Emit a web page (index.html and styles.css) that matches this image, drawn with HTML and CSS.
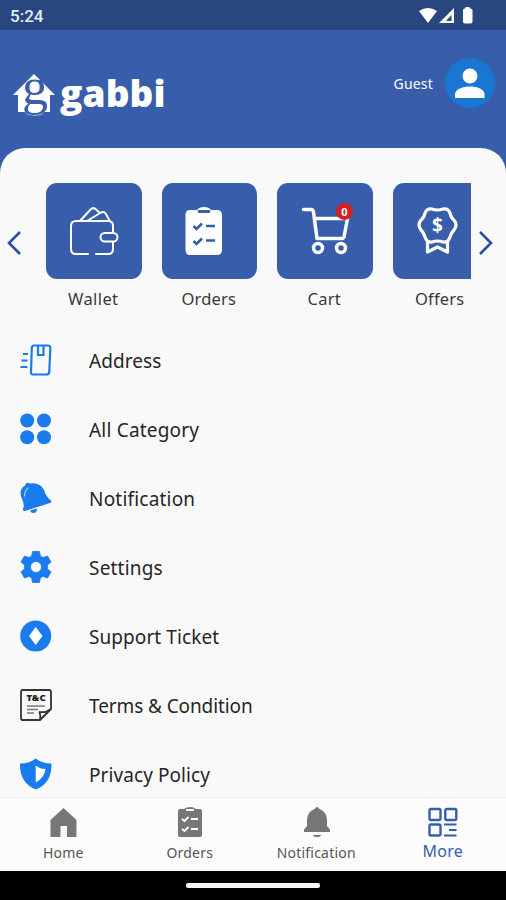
FILE: index.html
```html
<!DOCTYPE html>
<html lang="en">
<head>
  <meta charset="utf-8">
  <title>gabbi</title>
  <link rel="stylesheet" href="styles.css">
</head>
<body>
  <div class="statusbar">
    <span class="time">5:24</span>
    <svg class="status-icons" width="56" height="18" viewBox="0 0 56 18" fill="#fff">
      <path d="M0 4 Q9 -2 18 4 L9 16 Z"/>
      <path d="M35 1 V16 H20 Z M32.500 8 L27 14 H32.500 Z" fill-rule="evenodd"/>
      <path d="M44 3 Q44 1.500 46 1.500 L46.500 0 H50.500 L51 1.500 Q53.500 1.500 53.500 3 V14.500 Q53.500 16.500 51.500 16.500 H46 Q44 16.500 44 14.500 Z"/>
    </svg>
  </div>

  <header class="header">
    <div class="logo">
      <svg class="logo-mark" width="43" height="46" viewBox="0 0 43 46">
        <path d="M21 1 L42 22 H37 V39 H31 Q29 42.500 22 42.500 Q14 42.500 12 39 H5 V22 H0 Z" fill="#fff"/>
        <text x="22" y="31" class="logo-g">g</text>
      </svg>
      <span class="logo-text">gabbi</span>
    </div>
    <div class="user">
      <span class="user-name">Guest</span>
      <div class="avatar">
        <svg width="50" height="50" viewBox="0 0 50 50" fill="#fff">
          <circle cx="25" cy="18" r="7.500"/>
          <path d="M10 40 V36.500 C10 31 18 28.500 25 28.500 S39.500 31 39.500 36.500 V40 Z"/>
        </svg>
      </div>
    </div>
  </header>

  <main class="sheet">
    <div class="slider">
      <svg class="arrow" width="16" height="26" viewBox="0 0 16 26"><path d="M14 2 L3 13 L14 24"/></svg>
      <div class="tiles">
        <div class="tile">
          <div class="tile-box">
            <svg width="96" height="96" viewBox="0 0 96 96" fill="none" stroke="#fff" stroke-width="2" stroke-linecap="round" stroke-linejoin="round">
              <path d="M42 71 H30 Q25 71 25 66 V43 Q25 38 30 38 H62 Q67 38 67 43 V50 M67 59 V66 Q67 71 62 71 H50"/>
              <rect x="54.500" y="50" width="17" height="8.500" rx="4.200"/>
              <path d="M34 38 L44.500 26.500 Q47 24 49.500 26 L54 30 M41 38 L55 29.500 Q58 28 60 31 L63.500 37.500"/>
            </svg>
          </div>
          <span class="tile-label wallet">Wallet</span>
        </div>
        <div class="tile">
          <div class="tile-box">
            <svg width="96" height="96" viewBox="0 0 96 96">
              <path d="M28 27 H35 Q37 24 42 24 Q47 24 49 27 H55 Q60 27 60 32 V67 Q60 72 55 72 H28 Q23.500 72 23.500 67 V32 Q23.500 27 28 27 Z" fill="#fff"/>
              <path d="M37 28.500 H47" stroke="#375dab" stroke-width="2.800" stroke-linecap="round"/>
              <path d="M31.500 43 L34.500 46 L40 40.500 M31.500 58 L34.500 61 L40 55.500 M44 43 H53 M44 57.500 H53" fill="none" stroke="#375dab" stroke-width="2.600"/>
            </svg>
          </div>
          <span class="tile-label">Orders</span>
        </div>
        <div class="tile">
          <div class="tile-box">
            <svg width="96" height="96" viewBox="0 0 96 96" fill="none" stroke="#fff" stroke-width="3.500" stroke-linecap="round" stroke-linejoin="round">
              <path d="M26.500 26.500 H34 Q36 26.500 36.500 29 L40 55.500 H65 Q66.500 55.500 67 54 L70.500 35.500 H38"/>
              <circle cx="41" cy="65" r="4.500"/>
              <circle cx="64" cy="65" r="4.500"/>
            </svg>
            <span class="badge">0</span>
          </div>
          <span class="tile-label">Cart</span>
        </div>
        <div class="tile">
          <div class="tile-box">
            <svg width="96" height="96" viewBox="0 0 96 96" fill="none" stroke="#fff" stroke-width="3.200" stroke-linejoin="round">
              <path d="M39 26 Q44.500 28 50 26 Q55 25 57 30 Q58 35 61 37 Q65 42 61 47 Q58 50 57 54 Q55 60 50 59 Q44.500 57 39 59 Q34 60 32 54 Q31 50 28 47 Q24 42 28 37 Q31 35 32 30 Q34 25 39 26 Z"/>
              <path d="M34.500 58 V69 L44.500 64 L54.500 69 V58"/>
              <text x="44.500" y="49" class="dollar">$</text>
            </svg>
          </div>
          <span class="tile-label">Offers</span>
        </div>
      </div>
      <svg class="arrow" width="16" height="26" viewBox="0 0 16 26"><path d="M2 2 L13 13 L2 24"/></svg>
    </div>

    <ul class="menu">
      <li>
        <svg width="32" height="32" viewBox="0 0 32 32" fill="none" stroke="#1b7be5" stroke-width="2.200">
          <path d="M14 1.500 H28 Q30.500 1.500 30.300 4 L29.300 28 Q29 30.500 26.500 30.500 H13 Q10.800 30.500 11 28 L11.800 4 Q12 1.500 14 1.500 Z"/>
          <path d="M18 2 V11 H23.500 V2 M3 10 H8 M1.500 16.500 H7.500 M0.500 23 H7.500"/>
        </svg>
        <span>Address</span>
      </li>
      <li>
        <svg width="32" height="32" viewBox="0 0 32 32" fill="#197bee">
          <circle cx="7.200" cy="7.500" r="7"/><circle cx="24" cy="7.500" r="7"/>
          <circle cx="7.200" cy="24.300" r="7"/><circle cx="24" cy="24.300" r="7"/>
        </svg>
        <span class="wide">All Category</span>
      </li>
      <li>
        <svg width="32" height="32" viewBox="0 0 32 32" fill="#197bee">
          <path d="M5 3.500 Q6 -0.500 10 1.500 Q20 0 24 8 Q26 15 31 18.500 Q32 20.500 30 21 L5 29 Q2.500 29.500 3 27 Q5 23 2 17 Q-2 8 5 3.500 Z"/>
          <path d="M10 28.500 L17 26.500 Q17 30.500 14 31 Q11 31.500 10 28.500 Z"/>
          <path d="M8 6 Q4.500 9 4.500 14" fill="none" stroke="#a9cdfb" stroke-width="1.200" stroke-linecap="round"/>
        </svg>
        <span class="wide">Notification</span>
      </li>
      <li>
        <svg width="32" height="32" viewBox="0 0 32 32" fill="#197bee">
          <path d="M12.500 0.500 H19.500 L20.300 5 L23 6.500 L27.500 5 L31 11 L27.500 14 V18 L31 21 L27.500 27 L23 25.500 L20.300 27 L19.500 31.500 H12.500 L11.700 27 L9 25.500 L4.500 27 L1 21 L4.500 18 V14 L1 11 L4.500 5 L9 6.500 L11.700 5 Z M16 10.500 A5.500 5.500 0 1 0 16 21.500 A5.500 5.500 0 1 0 16 10.500 Z" fill-rule="evenodd" stroke="#197bee" stroke-width="0.800" stroke-linejoin="round"/>
        </svg>
        <span class="wide">Settings</span>
      </li>
      <li>
        <svg width="32" height="32" viewBox="0 0 32 32">
          <circle cx="15.700" cy="16" r="15.500" fill="#197bee"/>
          <path d="M15.700 7 L22.500 16 L15.700 25 L9 16 Z" fill="#fff"/>
        </svg>
        <span>Support Ticket</span>
      </li>
      <li>
        <svg width="32" height="32" viewBox="0 0 32 32" fill="none" stroke="#333" stroke-width="1.800" stroke-linejoin="round">
          <path d="M2.500 1 H29 Q31 1 31 3 V20 L20 31 H2.500 Q1 31 1 29 V3 Q1 1 2.500 1 Z M20 31 Q21 27 19.500 23 Q26 24 31 20"/>
          <path d="M7 17 H25 M7 20.500 H18 M7 24 H14" stroke="#777" stroke-width="1.300"/>
          <text x="16" y="12" class="tc">T&amp;C</text>
        </svg>
        <span class="narrow">Terms &amp; Condition</span>
      </li>
      <li>
        <svg width="32" height="32" viewBox="0 0 32 32">
          <path d="M15.700 0.500 Q22 5.500 31.500 5.500 Q32 25 15.700 31.500 Q-0.500 25 0 5.500 Q9.500 5.500 15.700 0.500 Z" fill="#197bee"/>
          <path d="M15.700 7.500 Q20 11 25.500 11 Q25 19 15.700 24.500 Z" fill="#fff"/>
        </svg>
        <span>Privacy Policy</span>
      </li>
    </ul>
  </main>

  <nav class="bottom-nav">
    <div class="nav-item">
      <svg width="32" height="32" viewBox="0 0 32 32"><path d="M16.500 1 L29.500 13 V30 H20 V19 H13.500 V30 H3.500 V13 Z" fill="#777"/></svg>
      <span>Home</span>
    </div>
    <div class="nav-item">
      <svg width="32" height="32" viewBox="0 0 32 32">
        <path d="M6 2 H10 Q12 0 16 0 Q20 0 22 2 H26 Q28 2 28 4 V28 Q28 30 26 30 H6 Q4 30 4 28 V4 Q4 2 6 2 Z" fill="#777"/>
        <path d="M12 3 H20 M8 12 L10.500 14 L14.500 10 M8 22 L10.500 24 L14.500 20 M17 12 H24 M17 22 H24" fill="none" stroke="#fff" stroke-width="1.800"/>
      </svg>
      <span>Orders</span>
    </div>
    <div class="nav-item">
      <svg width="32" height="32" viewBox="0 0 32 32" fill="#777">
        <path d="M14.500 2 Q17 -2 19.500 2 Q27 5 27 13 V19 L30 22.500 V25 H4 V22.500 L7 19 V13 Q7 5 14.500 2 Z"/>
        <path d="M13 28 H21 Q20.500 30 17 30 Q13.500 30 13 28 Z"/>
      </svg>
      <span>Notification</span>
    </div>
    <div class="nav-item active">
      <svg width="32" height="32" viewBox="0 0 32 32" fill="none" stroke="#375dab" stroke-width="2.400">
        <rect x="2.500" y="2" width="11" height="11" rx="1.500"/>
        <rect x="18.300" y="2" width="11" height="11" rx="1.500"/>
        <rect x="2.500" y="17.500" width="11" height="11" rx="1.500"/>
        <path d="M17 17.500 H29.500 M22 23 H29.500 M17 28.500 H29.500" stroke-width="2"/>
      </svg>
      <span>More</span>
    </div>
  </nav>

  <div class="system-bar"><div class="handle"></div></div>
</body>
</html>
```
FILE: styles.css
```css
* {
  box-sizing: border-box;
}
body {
  margin: 0;
  width: 506px;
  height: 900px;
  display: flex;
  flex-direction: column;
  overflow: hidden;
  background-color: #375dab;
  font-family: "Noto Sans", sans-serif;
  color: #262626;
}
svg {
  display: block;
  flex-shrink: 0;
}

/* top */
.statusbar {
  height: 30px;
  flex-shrink: 0;
  display: flex;
  justify-content: space-between;
  padding: 7px 31px 0 10px;
  background-color: #28477e;
}
.time {
  font-family: Roboto, sans-serif;
  font-size: 17px;
  font-weight: 500;
  line-height: 19px;
  color: #e6ebf5;
}
.header {
  height: 118px;
  flex-shrink: 0;
  display: flex;
  justify-content: space-between;
  padding: 28px 11px 0 13px;
}
.logo {
  display: flex;
  padding-top: 15px;
}
.logo-mark {
  overflow: visible;
}
.logo-g {
  font-family: "Liberation Serif", serif;
  font-size: 52px;
  text-anchor: middle;
  fill: #375dab;
}
.logo-text {
  margin-left: 4px;
  font-family: "Open Sans", sans-serif;
  font-size: 37px;
  font-weight: 800;
  line-height: 39px;
  letter-spacing: 0.1px;
  color: #fff;
}
.user {
  display: flex;
  align-items: center;
  height: 50px;
}
.user-name {
  margin-right: 12px;
  font-size: 14px;
  letter-spacing: 0.2px;
  color: #fff;
}
.avatar {
  width: 50px;
  height: 50px;
  border-radius: 50%;
  background-color: #1976d2;
}

/* content */
.sheet {
  height: 649px;
  flex-shrink: 0;
  padding-top: 35px;
  border-radius: 25px 25px 0 0;
  background-color: #f9f9f9;
  overflow: hidden;
}
.slider {
  display: flex;
  height: 142px;
}
.arrow {
  margin: 47px 0 0 6px;
  fill: none;
  stroke: #2c50a0;
  stroke-width: 2.6;
}
.tiles {
  display: flex;
  gap: 20px;
  width: 425px;
  margin-left: 24px;
  overflow: hidden;
}
.tiles + .arrow {
  margin-left: 7px;
}
.tile {
  width: 95.5px;
  flex-shrink: 0;
  text-align: center;
}
.tile-box {
  position: relative;
  height: 95.5px;
  border-radius: 11px;
  background-color: #375dab;
  overflow: hidden;
}
.tile-label {
  display: block;
  margin-top: 8px;
  padding-right: 1px;
  font-size: 16.5px;
  line-height: 24px;
  letter-spacing: 0.2px;
  color: #3a3a3a;
}
.wallet {
  letter-spacing: 0.4px;
}
.badge {
  position: absolute;
  top: 20px;
  left: 59px;
  width: 17px;
  height: 17px;
  border-radius: 50%;
  background-color: #d32020;
  color: #fff;
  font-size: 11px;
  font-weight: bold;
  line-height: 17px;
}
.dollar {
  font-size: 19px;
  font-weight: bold;
  text-anchor: middle;
  fill: #fff;
  stroke: none;
}
.tc {
  font-size: 9.5px;
  font-weight: 900;
  text-anchor: middle;
  fill: #222;
  stroke: none;
}

.menu {
  list-style: none;
  margin: 0;
  padding: 0 0 0 20px;
}
.menu li {
  display: flex;
  align-items: center;
  gap: 37px;
  height: 69px;
}
.menu span {
  margin-top: 2px;
  font-size: 19px;
  line-height: 28px;
  letter-spacing: 0.08px;
  white-space: nowrap;
}
.menu .wide {
  letter-spacing: 0.2px;
}
.menu .narrow {
  letter-spacing: -0.1px;
}

/* bottom */
.bottom-nav {
  height: 74px;
  flex-shrink: 0;
  display: flex;
  border-top: 1px solid #ececec;
  background-color: #fcfcfc;
}
.nav-item {
  width: 126.5px;
  display: flex;
  flex-direction: column;
  align-items: center;
  padding-top: 9px;
  font-size: 14px;
  line-height: 20px;
  color: #555;
}
.nav-item span {
  margin-top: 4px;
  letter-spacing: 0.2px;
}
.active {
  font-size: 16px;
  color: #375dab;
}
.nav-item.active span {
  margin-top: 2px;
}
.system-bar {
  height: 29px;
  flex-shrink: 0;
  display: flex;
  justify-content: center;
  padding-top: 12px;
  background-color: #000;
}
.handle {
  width: 134px;
  height: 5px;
  border-radius: 2px;
  background-color: #f5f5f5;
}
```
